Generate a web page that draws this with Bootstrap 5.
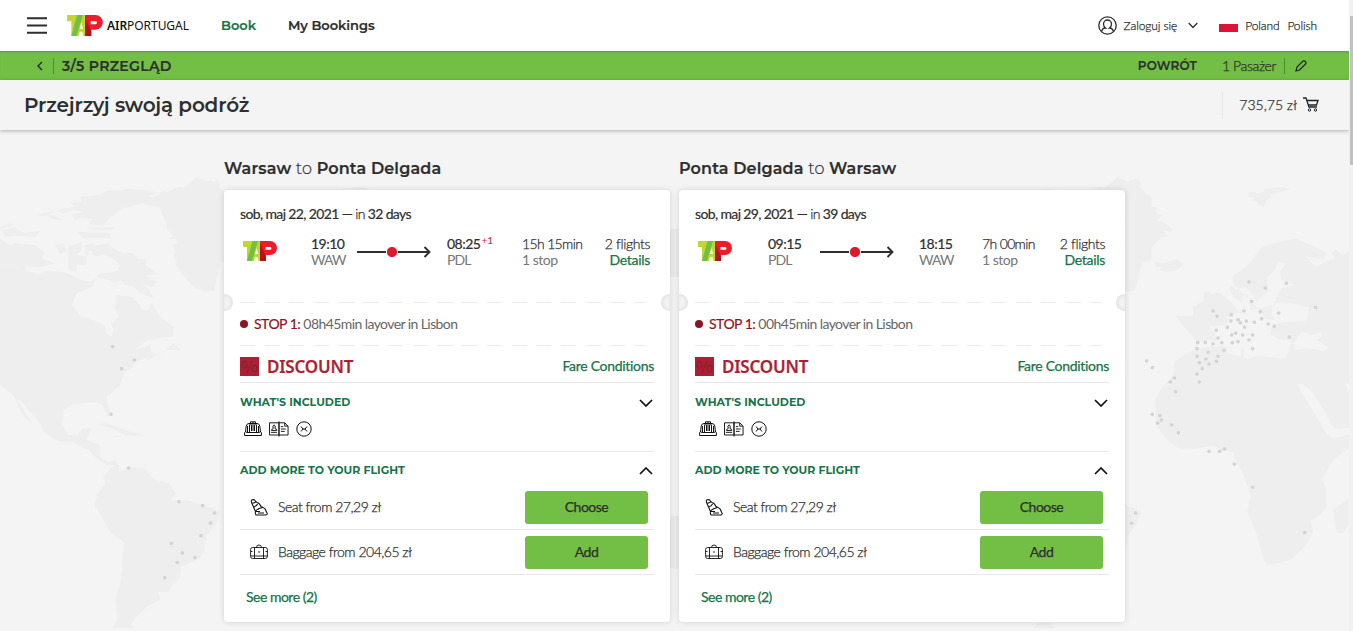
<!DOCTYPE html>
<html lang="pl">
<head>
    <meta charset="UTF-8" />
    <meta name="viewport" content="width=device-width, initial-scale=1" />
    <title>TAP Air Portugal - Przegląd</title>
    <link href="https://cdn.jsdelivr.net/npm/bootstrap@5.3.0/dist/css/bootstrap.min.css" rel="stylesheet" />
    <style>
        html, body { height: 631px; overflow: hidden; }
        body {
            font-family: Lato, "Liberation Sans", sans-serif;
            font-size: 14px;
            line-height: 16px;
            letter-spacing: -.5px;
            color: #2e2e2e;
            background: #f4f4f4;
        }
        svg { display: block; flex: none; }
        span, a { white-space: nowrap; }
        .mont { font-family: Montserrat, Inter, sans-serif; font-weight: 600; letter-spacing: 0; }
        .thin { font-weight: 300; -webkit-text-stroke: .25px #2e2e2e; }
        .page { width: 1349px; height: 631px; position: relative; }
        .scroll-track { position: absolute; z-index: 5; left: 1349px; top: 0; width: 4px; height: 631px; background: #f1f1f1; }
        .scroll-thumb { margin-left: 1px; width: 3px; height: 149px; background: #c1c1c1; }

        .top-bar { height: 51px; background: #fff; padding: 0 32px 0 27px; }
        .air { font-family: "Noto Sans", sans-serif; font-size: 12px; color: #111; margin-left: 4px; width: 82px; letter-spacing: -.05px; }
        .air b { font-weight: 600; }
        .top-link { font-size: 13px; text-decoration: none; color: #2e2e2e; margin-left: 32px; line-height: 15px; padding-bottom: 1px; }
        .top-link.on { color: #18744a; }
        .top-link, .return-name, .step-name, .trip h2 { -webkit-text-stroke: .2px; }
        .top-small { font-size: 12px; letter-spacing: -.12px; }
        .login-name { margin: 0 11px 0 7px; }
        .flag { margin: 5px 7px 0 21px; }
        .step-bar { height: 29px; background: #73be45; padding: 0 42px 0 35px; box-shadow: inset 0 2px 2px -1px rgba(0,0,0,.2); }
        .step-name { font-size: 14px; letter-spacing: .35px; margin-left: 8px; }
        .return-name { font-size: 12px; letter-spacing: .2px; margin-right: 25px; padding-top: 1px; }
        .pax { letter-spacing: -.4px; }
        .pencil { margin-left: 10px; }
        .vline { width: 1px; height: 16px; background: #4c8f35; }
        .step-line { margin-left: 9px; }
        .title-bar { height: 50px; box-shadow: 0 1px 4px rgba(0,0,0,.28); background: #f4f4f4; position: relative; padding: 0 30px 0 24px; }
        .title-bar h1 { font-size: 20px; letter-spacing: -.18px; margin: 0; }
        .price-line { width: 1px; height: 27px; background: #e8e8e8; margin-right: 16px; }
        .price { letter-spacing: 0; }
        .cart { margin: 0 0 2px 6px; }

        .map-bg { position: absolute; left: 0; top: 130px; }
        .trips { position: relative; padding: 29px 0 0 224px; gap: 9px; }
        .trip { width: 446px; flex: none; }
        .trip h2 { font-size: 16px; line-height: 20px; letter-spacing: .15px; margin: 0 0 11px; white-space: nowrap; }
        .trip h2 i { font-style: normal; font-weight: 300; }
        .ticket { height: 432px; background: #fff; border-radius: 4px; box-shadow: 0 0 6px rgba(0,0,0,.14); padding: 0 16px; position: relative; }
        .notch { position: absolute; top: 104px; width: 9px; height: 17px; background: #f4f4f4; }
        .notch.lft { left: 0; border-radius: 0 9px 9px 0; box-shadow: inset -1px 0 4px rgba(0,0,0,.1); }
        .notch.rgt { right: 0; border-radius: 9px 0 0 9px; box-shadow: inset 1px 0 4px rgba(0,0,0,.1); }
        .date-row { padding-top: 16px; height: 46px; letter-spacing: -.63px; -webkit-text-stroke: .2px; }
        .legs { display: grid; width: 410px; height: 66px; align-content: start; }
        .legs.out { grid-template-columns: 71px 46px 90px 75px 1fr; }
        .legs.back { grid-template-columns: 73px 52px 99px 63px 1fr; }
        .legs .carrier { margin: 5px 0 0 3px; }
        .legs .arrow { margin-top: 9px; }
        .clock { -webkit-text-stroke: .2px; }
        .grey { color: #777; }
        .code { letter-spacing: -.9px; }
        .time-total { letter-spacing: -.65px; }
        .flights { letter-spacing: -.35px; }
        .plus-day { font-size: 10px; color: #dc1a2b; line-height: 8px; vertical-align: 5px; margin-left: 1px; letter-spacing: 0; }
        .green-link { color: #18744a; text-decoration: none; letter-spacing: -.3px; -webkit-text-stroke: .25px; }
        .dashes { height: 1px; width: 406px; background: repeating-linear-gradient(90deg, #ececec 0 15px, transparent 15px 24.7px); }
        .stop-row { height: 42px; color: #666; letter-spacing: -.58px; }
        .stop-row b { font-weight: 400; color: #8c1420; margin-right: 3px; letter-spacing: -.5px; -webkit-text-stroke: .2px; }
        .stop-dot { width: 8px; height: 8px; border-radius: 50%; background: #8c1420; margin-right: 6px; }
        .ruled { width: 414px; border-bottom: 1px solid #e8e8e8; }
        .fare-row { height: 37px; padding-top: 5px; }
        .fare-row .green-link { padding-bottom: 2px; }
        .fare-name { font-family: "Noto Sans", sans-serif; font-weight: 600; font-size: 17px; letter-spacing: -.2px; color: #ae1f36; margin-left: 8px; -webkit-text-stroke: .2px; }
        .included { height: 69px; padding-top: 11px; }
        .section-name { font-size: 11px; font-weight: 700; color: #18744a; }
        .chev { margin: 2px 1px 0 0; }
        .chev-up { margin: 5px 1px 0 0; }
        .inc-icons { padding: 11px 0 0 4px; gap: 7px; }
        .extras-head { height: 33px; width: 414px; padding-top: 10px; }
        .extra { height: 45px; padding-left: 10px; }
        .extra svg { margin-right: 10px; }
        .btn-tap { width: 123px; height: 33px; border: 0; border-radius: 3px; background: #73be45; color: #2e2e2e; font-size: 14px; line-height: 16px; padding: 0; margin-right: 6px; letter-spacing: -.5px; -webkit-text-stroke: .25px; }
        .btn-tap:hover { background: #66ad3b; }
        .see-more { padding: 14px 0 0 6px; }
        .see-more .green-link { letter-spacing: -.5px; }
    </style>
</head>
<body>

<svg width="0" height="0" class="position-absolute">
    <defs>
        <symbol id="tap" viewBox="0 0 34 20">
            <path fill="#bfd730" d="M0 0h20v20h-4.500l-1-4h-2.500l-1 4H4V6H0z"/>
            <path fill="#73be45" d="M9.500 0H15L9 20H4z"/>
            <path fill="#fff" d="M13.500 7l1.600 6h-3.200z"/>
            <path fill="#ec1c2b" d="M17 0h10a7 7 0 0 1 0 14h-4v6h-6z"/>
            <path fill="#b5121b" d="M17 2l6 14v4h-6z"/>
            <path fill="#fff" d="M22.500 6H27a1.400 1.400 0 0 1 0 2.800h-4.500z"/>
        </symbol>
        <symbol id="percent" viewBox="0 0 20 20">
            <rect width="20" height="20" fill="#ae1f36"/>
            <g fill="none" stroke="#7d2630" stroke-width="1.200"><ellipse cx="4.800" cy="8" rx="2.500" ry="3.700"/><ellipse cx="15.500" cy="12" rx="2.500" ry="3.500"/><path d="M13 4L7 17"/></g>
        </symbol>
        <symbol id="bags" viewBox="0 0 18 16">
            <g fill="none" stroke="#111"><path d="M1.500 11l.7-6Q2.700 2.500 5 2.500h8q2.300 0 2.800 2.500l.7 6M.6 11.500Q1.500 10 3 11.500h12q1.500-1.500 2.400 0v3H.6zM6.500 2.500V.8h5v1.700M9 1v9M5.500 11V5q0-2 1-2t1 2v5M10.500 10V5q0-2 1-2t1 2v6M3.500 5v6M14.500 5v6"/></g>
        </symbol>
        <symbol id="passport" viewBox="0 0 21 16">
            <g fill="none" stroke="#111"><path d="M.5 1.500h10v12.800H.5zM10.500 1.500h6l3.500 3.500v9.300h-9.500M10.500 0v16M16.500 1.500V5H20M2 11.500h6.500M12.500 5.500h2.500M12.500 8h5M12.500 10.500h4"/><path d="M2.500 9.500q.5-1.800 2-2-1.200-3.500.8-3.800 2 .3 1 3.800 1.700.2 2 2z"/></g>
        </symbol>
        <symbol id="nogo" viewBox="0 0 16 16">
            <g fill="none" stroke="#111"><circle cx="8" cy="8" r="7.200"/><path d="M5 5.500l2 2.500-2 2.500M11 5.500L9 8l2 2.500M7 8h2"/></g>
        </symbol>
        <symbol id="seat" viewBox="0 0 18 17">
            <g fill="none" stroke="#111" stroke-width="1.100"><path d="M2 4.500Q.5 1.200 2.200.8 5 .2 5.500 2.500L7 3.500q2.500.5 4 4l2 1q2.500 1 3 3.500l1.300 2.500q-.3 1.500-1.300 1.500H6q-1-1.500-.5-3.500zM2 4.500l3.500-1.200M3.500 8q3-.5 4-3M5.500 12.500q1-2.500 7-4M6 12.500h4M8 14h6"/></g>
        </symbol>
        <symbol id="suitcase" viewBox="0 0 18 16">
            <g fill="none" stroke="#111" stroke-width=".9"><rect x=".6" y="3.500" width="16.800" height="11" rx="2"/><path d="M6.500 3.500Q6.500 1 9 1t2.500 2.500M4.500 3.500v11M13.500 3.500v11M.5 7.500h2M15.500 7.500h2M9 7v2M.5 12h17"/></g>
        </symbol>
        <symbol id="chev" viewBox="0 0 14 8"><path d="M1 1l6 6 6-6" fill="none" stroke="#111" stroke-width="1.700"/></symbol>
        <symbol id="chev-up" viewBox="0 0 14 8"><path d="M1 7l6-6 6 6" fill="none" stroke="#111" stroke-width="1.700"/></symbol>
        <symbol id="arrow" viewBox="0 0 75 14"><path d="M0 7h73M67.500 2l5 5-5 5" fill="none" stroke="#2e2e2e" stroke-width="1.900"/><circle cx="35" cy="7" r="5.600" fill="#dc1a2b" stroke="#fff"/></symbol>
    </defs>
</svg>

<div class="page">

    <!-- World map behind the tickets, repeated every 921px -->
    <svg class="map-bg" width="1349" height="501" viewBox="0 0 1349 501">
        <defs>
            <g id="americas" fill="#eeeeee">
                <path d="M0 400L60 415 110 432 150 420 200 428 245 450 270 455 288 445 278 470 230 490 215 525 240 555 290 575 313 585 318 610 335 620 340 600 333 582 357 560 345 535 350 495 395 500 415 520 425 540 445 540 455 520 480 560 520 590 520 618 480 625 440 632 405 660 450 645 455 668 480 675 520 640 543 660 500 660 445 692 435 685 405 695 400 710 375 725 360 765 320 800 325 830 335 855 322 855 305 822 280 816 220 822 190 840 187 885 205 915 230 917 248 895 275 893 260 930 300 945 300 980 325 997 345 990 356 1010 335 1005 320 1005 290 985 265 958 240 950 215 935 180 935 130 905 125 885 90 845 60 808 52 810 96 880 70 860 40 795 0 765z"/>
                <path d="M310 1040l28-30 20-5 0 18 10 0 18-12 50 5 25 32 45 12 20 30-15 22 50-2 50 16 50 18-12 35-30 42-5 40-15 24-55 25-5 32-35 45-30 0 8 20-45 26-30 30-15 20 10 12h-65l15-23-5-70 15-45 10-120-40-30-25-45-23-35 8-35 25-30z"/>
                <path d="M430 220l40-25 20-12 12 4 33-17 15 3 40-30 20 6 8 8 17-8 5 10 10-12 10 12-2 12 12 16 22 14v190l-30 8-20 83-25 3-30-10-30-30-30-40 5-12-12-10 8-20-10-18 15-5-5-12-20-3 12-10-18-15-5-25-18-42-48-12 12-25z"/>
                <path d="M200 235l25-5-15-15 35 0 -5-15 60-5 25-15 30 2 20-5 70 5 30 5-30 12 20 5-45 18-55 15-35 25-20 25-45-5 15-15-35-5-20 10-10-20 35-5-30-8-30 12-20-10-35 18-25-5zM255 292l90 0-15 10-60-5zM0 325l30 20 15-5 60 5 30 25-10 15 40 15-45 12-40-4-8 24-12-19-60-13H0zM5 300l40-5 30 15 45-8-15 20-45-5-45 3zM130 245l60 25-35-3zM165 345l25-5 10 25-20 8zM205 350l40-15 0 25-15 15 30 5 0 25-30 0 0 20-25-5 0-40zM255 345l30-5-20 20 0 20-10-10zM290 345l35-5 15 15 30 15 25-2 20 18 25 5-5 15 40 25-25 5-15 0 35 20-15 15-30-10 20 15 15 28-40-15-20-20-25-5-10-15-20 10-15-8 -40-10 10-12 30 0 25-10 5-15-15-15-30-15-30 5-10-15-15 0-5-15zM230 305l100 5 0 15-80 0zM0 290l30-10 15 3-45 15z"/>
                <path d="M293 883l25-5 50 20 50 14 20 5-60 0-35-18zM343 918h20v3h-20z"/>
            </g>
            <g id="old-world">
                <path fill="#eeeeee" d="M400 185l20 0 5 5 25-5-5-8 20-2 40-5 20 8-50 14-15 2 12 8-18 8-8 22-20-10 5-5-20-5 10-8-20-3zM120 395l25 5 40-12 22 14-20 18-30 5-25-5 10-8-20-2zM232 530l30-15 8 25-38 20 4-18zM268 485l20 0-5 20 20 25 15 25-5 15-38 5 12-15-10-20 0-20-12-15z"/>
                <path fill="#eeeeee" d="M245 635L305 632 298 605 280 590 330 585 350 555 385 540 380 500 395 490 405 520 405 540 440 535 475 525 485 500 500 475 545 465 500 450 495 425 513 400 490 395 480 420 455 445 460 480 440 500 425 520 410 490 390 470 360 480 353 440 400 405 440 350 500 335 540 325 600 350 635 370 625 388 570 378 590 400 605 412 630 395 660 385 650 370 665 358 680 375 702 365V893l-30 5-15-5-25-40-35-60-30-30-18 0 8 20 25 40 30 50 25 40 20 12 45-12V955l-50 38-30 55 12 30 0 55-15 18-32 20 8 35-30 50-40 35-50 12-18 2-10-15-22-75-28-70 10-50-25-70-25-40 0-20-40-5-20-12-60 8-45 0-35-25-35-45 0-40-3-35 20-35 35-40 5-40 40-30 60-15 55-2 5 20 65 18 20-10 85 10 12-25 10-30-40-5-25-15 5-25 30-10 70-5 10-20 0-20-40-10-50-5-20 15 0 20 10 18-30-3-25-35-15-15-45-45-18-5-5 8 10 22 40 32-18 24-15-26-40-35-20-5-30 18-28 52-62 0z"/>
                <path fill="#eeeeee" d="M108 -50h1v1h-1zM655 1140l45-35v80l-15 25-20-2zM402 684l28 0-3 15zM378 655h9v28h-9z"/>
                <path fill="#f4f4f4" d="M535 640l25-35 30 10 30-10 0 15-15 10 40 25-20 8-50-8-35 5zM690 760l12 0v25z"/>
                <path fill="none" stroke="#d3d3d3" stroke-width="11" stroke-linecap="round" d="M402 456h.1M451 474h.1M514 460h.1M410 514h.1M602 532h.1M294 543h.1M306 559h.1M349 554h.1M387 543h.1M436 545h.1M491 549h.1M348 573h.1M369 569h.1M376 578h.1M394 573h.1M418 577h.1M440 566h.1M460 582h.1M478 589h.1M304 601h.1M337 592h.1M389 592h.1M350 615h.1M362 609h.1M383 615h.1M413 615h.1M523 621h.1M309 624h.1M402 630h.1M248 638h.1M271 638h.1M294 642h.1M320 638h.1M352 638h.1M369 635h.1M246 656h.1M327 661h.1M413 656h.1M279 667h.1M246 679h.1M273 687h.1M309 679h.1M304 694h.1M253 698h.1M282 702h.1M262 716h.1M246 732h.1M253 756h.1M95 693h.1M112 713h.1M178 744h.1M166 756h.1M182 785h.1M112 853h.1M135 857h.1M139 870h.1M128 879h.1M170 885h.1M190 908h.1M282 964h.1M314 964h.1M328 957h.1M358 1002h.1M413 1072h.1M569 1208h.1"/>
            </g>
            <path id="america-dots" fill="none" stroke="#d3d3d3" stroke-width="11" stroke-linecap="round" d="M338 650h.1M403 690h.1M365 716h.1M333 853h.1M386 1014h.1M537 1115h.1M608 1127h.1M644 1149h.1M632 1179h.1M603 1217h.1M514 1240h.1M547 1269h.1M585 1283h.1M532 1298h.1M494 1343h.1"/>
        </defs>
        <g transform="scale(.3333)"><use href="#americas"/><use href="#america-dots"/></g>
        <g transform="translate(194 0) scale(.3333)"><use href="#old-world"/></g>
        <g transform="translate(921 0) scale(.3333)">
            <use href="#americas"/><use href="#america-dots"/>
            <path fill="#eeeeee" d="M610 155l20 2 18-12-5 30 25 25 15 12-5 15 30 5-5 15 20 10-20 15 25 5 15 10 15 15-35 0 20 15-25 8-30 30-30 40-30 50-10 30z"/>
        </g>
        <g transform="translate(1115 0) scale(.3333)"><use href="#old-world"/></g>
        <path fill="#ebebeb" d="M670 99h9v48h-9zM670 386h9v53l-9-1z"/>
    </svg>

    <nav class="top-bar d-flex align-items-center">
        <svg width="20" height="17" class="me-3"><path d="M0 1.300h20M0 8.500h20M0 15.700h20" stroke="#2e2e2e" stroke-width="2"/></svg>
        <svg width="36" height="21" class="ms-1"><use href="#tap"/></svg>
        <span class="air"><b>AIR</b>PORTUGAL</span>
        <a href="#" class="top-link mont on">Book</a>
        <a href="#" class="top-link mont">My Bookings</a>
        <div class="ms-auto d-flex align-items-center top-small thin">
            <svg width="19" height="19" fill="none" stroke="#2e2e2e" stroke-width="1.300"><circle cx="9.500" cy="9.500" r="8.700"/><path d="M3.500 15.500q1-3.500 4-3.500-2-1.500-2-4a4 4 0 0 1 8 0q0 2.500-2 4 3 0 4 3.500"/></svg>
            <span class="login-name">Zaloguj się</span>
            <svg width="10" height="7"><path d="M.7 1L5 5.500 9.300 1" fill="none" stroke="#2e2e2e" stroke-width="1.300"/></svg>
            <svg class="flag" width="19" height="8"><path fill="#dc143c" d="M0 0h19v8H0z"/></svg>
            <span class="me-2">Poland</span>
            <span>Polish</span>
        </div>
    </nav>

    <div class="step-bar d-flex align-items-center">
        <svg width="9" height="10"><path d="M7 1L3 5l4 4" fill="none" stroke="#222" stroke-width="1.300"/></svg>
        <div class="vline step-line"></div>
        <span class="mont step-name">3/5 PRZEGLĄD</span>
        <span class="mont ms-auto return-name">POWRÓT</span>
        <span class="thin pax me-2">1 Pasażer</span>
        <div class="vline"></div>
        <svg class="pencil" width="12" height="12"><path d="M1 11l1-4 6-6q1.500-.5 2.500.8t0 2.200L4.500 10z" fill="none" stroke="#222" stroke-width="1.200"/></svg>
    </div>

    <div class="title-bar d-flex align-items-center">
        <h1 class="mont">Przejrzyj swoją podróż</h1>
        <div class="price-line ms-auto"></div>
        <span class="thin price">735,75 zł</span>
        <svg class="cart" width="16" height="15"><path d="M0 1h3l3 9h8M3.700 3.500H15L13.500 8H5" fill="none" stroke="#222" stroke-width="1.300"/><circle cx="6.500" cy="13" r="1.200" fill="none" stroke="#222"/><circle cx="12.500" cy="13" r="1.200" fill="none" stroke="#222"/></svg>
    </div>

    <main class="trips d-flex" id="trips"></main>
    <div class="scroll-track pt-3"><div class="scroll-thumb"></div></div>
</div>

<script>
    const trips = [
        { dir: 'out', from: 'Warsaw', to: 'Ponta Delgada', date: 'sob, maj 22, 2021', days: '32 days', dep: '19:10', depCode: 'WAW', arr: '08:25', plus: '+1', arrCode: 'PDL', time: '15h 15min', layover: '08h45min' },
        { dir: 'back', from: 'Ponta Delgada', to: 'Warsaw', date: 'sob, maj 29, 2021', days: '39 days', dep: '09:15', depCode: 'PDL', arr: '18:15', plus: '', arrCode: 'WAW', time: '7h 00min', layover: '00h45min' }
    ];

    document.getElementById('trips').innerHTML = trips.map(t => `
        <section class="trip">
            <h2 class="mont">${t.from} <i>to</i> ${t.to}</h2>
            <div class="ticket">
                <div class="notch lft"></div>
                <div class="notch rgt"></div>
                <div class="date-row"><span>${t.date} — <span class="thin">in</span> ${t.days}</span></div>
                <div class="legs ${t.dir}">
                    <svg class="carrier" width="34" height="20"><use href="#tap"/></svg>
                    <div><span class="clock">${t.dep}</span><br><span class="grey code">${t.depCode}</span></div>
                    <svg class="arrow" width="75" height="14"><use href="#arrow"/></svg>
                    <div><span class="clock">${t.arr}</span><span class="plus-day">${t.plus}</span><br><span class="grey code">${t.arrCode}</span></div>
                    <div class="d-flex justify-content-between">
                        <div><span class="thin time-total">${t.time}</span><br><span class="grey">1 stop</span></div>
                        <div class="text-end"><span class="thin flights">2 flights</span><br><a href="#" class="green-link">Details</a></div>
                    </div>
                </div>
                <div class="dashes"></div>
                <div class="stop-row d-flex align-items-center"><div class="stop-dot"></div><span><b>STOP 1:</b>${t.layover} layover in Lisbon</span></div>
                <div class="dashes"></div>
                <div class="fare-row ruled d-flex align-items-center">
                    <svg width="19" height="19"><use href="#percent"/></svg>
                    <span class="fare-name">DISCOUNT</span>
                    <a href="#" class="green-link ms-auto">Fare Conditions</a>
                </div>
                <div class="included ruled">
                    <div class="d-flex justify-content-between align-items-center">
                        <span class="section-name mont">WHAT'S INCLUDED</span>
                        <svg class="chev" width="14" height="8"><use href="#chev"/></svg>
                    </div>
                    <div class="inc-icons d-flex">
                        <svg width="18" height="16"><use href="#bags"/></svg>
                        <svg width="20" height="16"><use href="#passport"/></svg>
                        <svg width="16" height="16"><use href="#nogo"/></svg>
                    </div>
                </div>
                <div class="extras-head d-flex justify-content-between">
                    <span class="section-name mont">ADD MORE TO YOUR FLIGHT</span>
                    <svg class="chev-up" width="14" height="8"><use href="#chev-up"/></svg>
                </div>
                <div class="extra ruled d-flex align-items-center">
                    <svg width="18" height="17"><use href="#seat"/></svg>
                    <span class="thin">Seat from 27,29 zł</span>
                    <button class="btn btn-tap ms-auto">Choose</button>
                </div>
                <div class="extra ruled d-flex align-items-center">
                    <svg width="18" height="16"><use href="#suitcase"/></svg>
                    <span class="thin">Baggage from 204,65 zł</span>
                    <button class="btn btn-tap ms-auto">Add</button>
                </div>
                <div class="see-more"><a href="#" class="green-link">See more (2)</a></div>
            </div>
        </section>`).join('');
</script>

</body>
</html>
